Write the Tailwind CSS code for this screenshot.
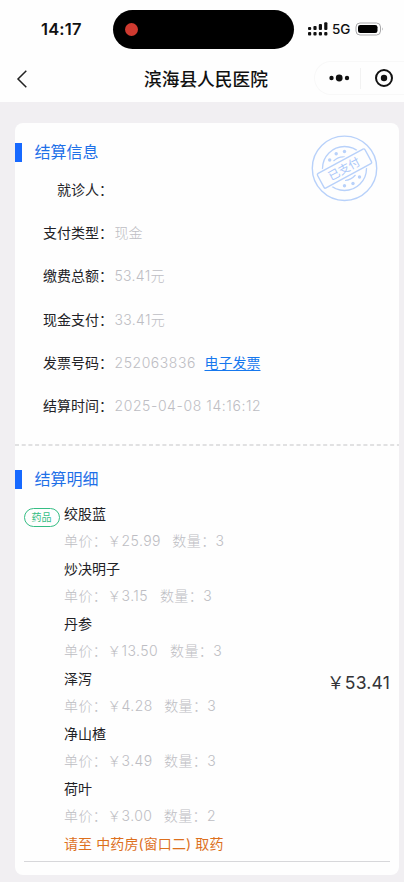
<!DOCTYPE html>
<html lang="zh-CN">
<head>
<meta charset="utf-8">
<meta name="viewport" content="width=device-width, initial-scale=1">
<title>结算信息</title>
<script src="https://cdn.jsdelivr.net/npm/@tailwindcss/browser@4"></script>
</head>
<body class="h-[882px] w-[404px] overflow-hidden bg-[#f1eff2] font-['Inter','Noto_Sans_CJK_SC',sans-serif] text-[14px] text-[#222226]">
<header class="h-[102px] bg-[#fefefe]">
  <div class="flex h-[58px] items-center pt-px">
    <div class="ml-[41px] w-[72px] pb-px text-[16.5px] font-semibold leading-5 text-[#111]"><span class="tracking-[0.2px]">14:17</span></div>
    <div class="flex h-[39px] w-[181px] items-center rounded-full bg-black pl-[12px]"><span class="size-[13px] rounded-full bg-[#cf3a30]"></span></div>
    <svg class="-mt-px ml-[14px]" width="20" height="14" viewBox="0 0 20 14" fill="#111">
      <rect x="0" y="5" width="3.2" height="3" rx="1"/><rect x="5.4" y="4" width="3.2" height="4" rx="1"/><rect x="10.8" y="2" width="3.2" height="6" rx="1"/><rect x="16.2" y="0.2" width="3.2" height="7.8" rx="1"/>
      <rect x="0" y="10" width="3.2" height="3.4" rx="1"/><rect x="5.4" y="10" width="3.2" height="3.4" rx="1"/><rect x="10.8" y="10" width="3.2" height="3.4" rx="1"/><rect x="16.2" y="10" width="3.2" height="3.4" rx="1"/>
    </svg>
    <div class="-mt-px ml-[4px] w-[20px] text-[13.5px] font-medium leading-5 text-[#111]">5G</div>
    <svg class="-mt-px ml-[3px]" width="29" height="14" viewBox="0 0 29 14">
      <rect x="1" y="1" width="24.5" height="12" rx="4" fill="#fff" stroke="#a9a9ab"/><rect x="3" y="3" width="19.5" height="8" rx="2.3"/><path d="M27 5.2q1.6 1.8 0 3.6z" fill="#a9a9ab"/>
    </svg>
  </div>
  <nav class="flex h-[44px] items-center pb-[4px]">
    <svg class="ml-[16px] mt-px" width="12" height="18" viewBox="0 0 12 18" fill="none" stroke="#222" stroke-width="1.5"><path d="M10.3 0.7 2 9l8.3 8.3"/></svg>
    <h1 class="ml-[116px] w-[170px] whitespace-nowrap pt-[3px] text-[17.7px] font-medium leading-6 text-[#111]">滨海县人民医院</h1>
    <div class="flex h-[34px] w-[90px] items-center rounded-l-full border border-r-0 border-[#f8f8f8]">
      <svg class="ml-[14px]" width="22" height="10" viewBox="0 0 22 10" fill="#111"><circle cx="2.5" cy="5" r="2.2"/><circle cx="10.2" cy="5" r="3.4"/><circle cx="18" cy="5" r="2.2"/></svg>
      <span class="ml-[9px] h-[21px] w-px bg-[#f2f2f2]"></span>
      <svg class="ml-[13px]" width="20" height="20" viewBox="0 0 20 20"><circle cx="10" cy="10" r="8" fill="none" stroke="#111" stroke-width="2"/><circle cx="10" cy="10" r="3.2" fill="#111"/></svg>
    </div>
  </nav>
</header>
<main class="ml-[15px] mt-[20.5px] h-[752.5px] w-[383.5px] rounded-[8px] bg-[#fefefe]">
  <section class="relative h-[322.5px] pt-[20px]">
    <h2 class="flex h-[19px] items-center text-[16px] text-[#1e70e8]"><span class="mr-[13px] h-[19px] w-[6.5px] bg-[#1769ff]"></span>结算信息</h2>
    <svg class="absolute left-[296px] top-[12px]" width="67" height="67" viewBox="0 0 67 67" fill="none" stroke="#b8d1fa">
      <circle cx="33.5" cy="33.3" r="32.2" stroke-width="1.4"/><circle cx="33.5" cy="33.5" r="22" stroke-width="1.3"/>
      <g fill="#b8d1fa" stroke="none"><circle cx="18.7" cy="25" r="1.7"/><circle cx="25.2" cy="18.8" r="1.7"/><circle cx="33.5" cy="16.5" r="1.7"/><circle cx="48.5" cy="42" r="1.7"/><circle cx="42" cy="48.5" r="1.7"/><circle cx="33.5" cy="50.7" r="1.7"/></g>
      <path d="M22.5 26Q28 21 34 22M34 45.5Q40 45 44.5 40" stroke-width="1.2"/>
      <g transform="rotate(-28.5 33.5 33.5)"><rect x="5" y="23.5" width="57" height="20" fill="#fefefe" stroke="none"/><rect x="6.5" y="25.3" width="54" height="16.5" rx="1.5" fill="#fefefe" stroke-width="1.4"/><text x="33" y="37.7" text-anchor="middle" font-size="11.5" fill="#a9c7fa" stroke="none">已支付</text></g>
    </svg>
    <dl class="mt-[6px] grid auto-rows-[43.4px] grid-cols-[98px_1fr] leading-[43px] [&>dt]:text-right [&>dd]:pl-[1.5px] [&>dd]:font-light [&>dd]:text-[#bdbdc3]">
      <dt>就诊人：</dt><dd></dd>
      <dt>支付类型：</dt><dd>现金</dd>
      <dt>缴费总额：</dt><dd class="tracking-[0.3px]">53.41元</dd>
      <dt>现金支付：</dt><dd class="tracking-[0.3px]">33.41元</dd>
      <dt>发票号码：</dt><dd><span class="inline-block w-[90px] tracking-[0.55px]">252063836</span><a class="font-normal text-[#1678ee] underline decoration-1 underline-offset-2">电子发票</a></dd>
      <dt>结算时间：</dt><dd class="tracking-[0.58px]">2025-04-08 14:16:12</dd>
    </dl>
  </section>
  <svg class="-mt-px block" width="384" height="2"><path d="M0 1H384" stroke="#c4c4c6" stroke-width="1.2" stroke-dasharray="4 2.7"/></svg>
  <section class="pt-[23.5px]">
    <h2 class="flex h-[19px] items-center text-[16px] text-[#1e70e8]"><span class="mr-[13px] h-[19px] w-[6.5px] bg-[#1769ff]"></span>结算明细</h2>
    <div class="mx-[8.5px] mt-[11px] flex h-[362px] border-b border-[#d7d7da]">
      <span class="mt-[8px] flex h-[19px] w-[36px] shrink-0 items-center justify-center rounded-full border border-[#35bd84] text-[10px] text-[#35bd84]">药品</span>
      <div class="ml-[4.5px] flex-1 leading-[27.45px] [&>p]:h-[27.5px] [&>p]:whitespace-pre [&>p:nth-child(even)]:font-light [&>p:nth-child(even)]:tracking-[0.4px] [&>p:nth-child(even)]:text-[#bdbdc3]">
        <p>绞股蓝</p><p>单价：￥25.99<span class="ml-[11.5px]">数量：3</span></p>
        <p>炒决明子</p><p>单价：￥3.15<span class="ml-[12px]">数量：3</span></p>
        <p>丹参</p><p>单价：￥13.50<span class="ml-[12px]">数量：3</span></p>
        <p>泽泻</p><p>单价：￥4.28<span class="ml-[11.5px]">数量：3</span></p>
        <p>净山楂</p><p>单价：￥3.49<span class="ml-[11.5px]">数量：3</span></p>
        <p>荷叶</p><p>单价：￥3.00<span class="ml-[11.5px]">数量：2</span></p>
        <p class="tracking-[0.1px] text-[#dd701d]">请至 中药房(窗口二) 取药</p>
      </div>
      <strong class="self-center whitespace-nowrap pt-[6px] text-[17.5px] font-normal tracking-[0.2px] text-[#333337]">￥53.41</strong>
    </div>
  </section>
</main>
</body>
</html>
